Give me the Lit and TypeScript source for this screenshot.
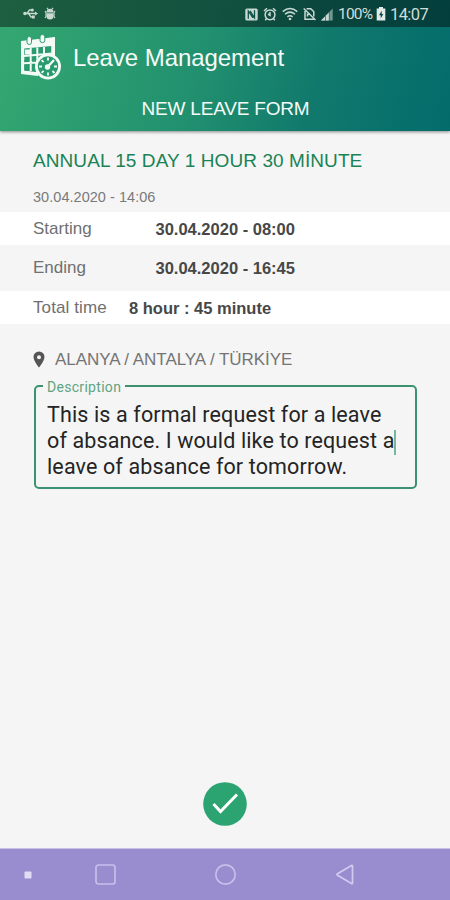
import { LitElement, html, css, svg } from "lit";
import { customElement } from "lit/decorators.js";

const icon = (w: number, h: number, body: unknown) =>
  html`<svg width=${w} height=${h} viewBox="0 0 ${w} ${h}" fill="none">${body}</svg>`;

@customElement("status-bar")
class StatusBar extends LitElement {
  static styles = css`
    :host { display: flex; align-items: center; height: 27px; padding: 0 23px 0 23px; background: rgba(0, 0, 0, 0.43); color: #d0ddd8; font: 16px/27px Roboto, sans-serif; }
    svg { display: block; flex: none; }
    .usb { margin-right: 6px; }
    .fill { flex: 1; }
    .right { display: flex; align-items: center; gap: 5px; padding-top: 1px; }
    .pct { font-size: 15.5px; margin: 0; width: 33px; letter-spacing: -0.8px; white-space: nowrap; }
    .time { font-size: 16.5px; margin-left: -1px; width: 37px; letter-spacing: -0.6px; white-space: nowrap; }
  `;
  render() {
    return html`
      <span class="usb">${icon(15, 13, svg`<g stroke="#c9d8d0" stroke-width="1.3"><path d="M1 6.500H13M4 6.500L6.500 3H9M5.500 6.500L8 10H10"/></g><g fill="#c9d8d0"><circle cx="2" cy="6.500" r="1.800"/><circle cx="9.300" cy="3" r="1.600"/><path d="M9 8.600h2.800v2.800H9zM12 4.400l3 2.100-3 2.100z"/></g>`)}</span>
      ${icon(12, 13, svg`<path d="M2.500 5.500a3.500 3.700 0 0 1 7 0z" fill="#c9d8d0"/><path d="M2.500 6.300h7v2.700a3.500 3.500 0 0 1-7 0z" fill="#c9d8d0"/><path d="M3 .8l1.200 1.700M9 .8L7.800 2.500M1 4l1 1.500V9.500L1 11M11 4l-1 1.500V9.500l1 1.500" stroke="#c9d8d0" stroke-width="1.200"/>`)}
      <span class="fill"></span>
      <span class="right">
        ${icon(13, 13, svg`<rect x=".3" y=".5" width="12.400" height="12" rx="1.500" fill="#c9d8d4"/><path d="M3.300 10.800V3L8 9.800M5 2.800L9.500 9.800V2.300" stroke="#0f5045" stroke-width="1.300"/>`)}
        ${icon(14, 14, svg`<g stroke="#c9d8d4" stroke-width="1.500"><circle cx="7" cy="7.800" r="4.900"/><path d="M1 4L4 1.300M13 4L10 1.300M7 5V8.300L5 7M3.500 11.500L2.300 13.200M10.500 11.500l1.200 1.700"/></g>`)}
        ${icon(16, 14, svg`<g stroke="#c9d8d4" stroke-width="1.500"><path d="M.7 4.600Q8-1.500 15.300 4.600M3 7.300Q8 3 13 7.300M5.400 9.900Q8 7.700 10.600 9.900"/></g><circle cx="8" cy="12" r="1.300" fill="#c9d8d4"/>`)}
        ${icon(13, 14, svg`<g stroke="#c9d8d4" stroke-width="1.500"><path d="M3.500 1.700H7.800L10.800 4.700V9.500M2 4V12.300H11M.7 1.500L12.500 13"/><path d="M4.500 9.500V7.300H7"/></g>`)}
        ${icon(12, 13, svg`<path d="M0 12.500L11.700 .5V12.500z" fill="#6f9a92"/><path d="M0 12.500L8 4.500V12.500z" fill="#c9d8d4"/><path d="M4.500 6v7M8.300 3v10" stroke="#2b6259" stroke-width=".7"/>`)}
        <span class="pct">100%</span>
        ${icon(10, 14, svg`<path d="M3 0h4v1.500h2.300v12H.7v-12H3z" fill="#e3ebe9"/><path d="M5.700 3.800L3 8.200h1.700v3.200L7.300 7H5.700z" fill="#0b4742"/>`)}
        <span class="time">14:07</span>
      </span>`;
  }
}

@customElement("form-row")
class FormRow extends LitElement {
  static properties = { label: {}, value: {} };
  declare label: string;
  declare value: string;
  static styles = css`
    :host { display: flex; align-items: center; box-sizing: border-box; height: 33px; padding: 0 0 0 33px; background: #fff; font-family: "Liberation Sans", Arial, sans-serif; font-size: 17px; line-height: 20px; color: #707070; white-space: nowrap; }
    :host([plain]) { background: none; height: 46px; }
    .label { width: 122.500px; }
    :host([compact]) .label { width: 96px; letter-spacing: 0.100px; }
    .value { font-size: 16.500px; font-weight: bold; color: #474747; }
  `;
  render() {
    return html`<span class="label">${this.label}</span><span class="value">${this.value}</span>`;
  }
}

@customElement("app-root")
class AppRoot extends LitElement {
  static styles = css`
    :host { display: flex; flex-direction: column; height: 900px; background: #f5f5f5; font-family: "Liberation Sans", Arial, sans-serif; white-space: nowrap; overflow: hidden; }
    svg { display: block; flex: none; }
    header { height: 131px; background: linear-gradient(105deg, #35a871 0%, #21906f 45%, #11796c 70%, #036b6b 100%); box-shadow: 0 1px 3px rgba(0, 0, 0, 0.45); color: #f5fbf8; }
    .brand { display: flex; align-items: center; gap: 12px; height: 62px; padding-left: 20px; font-size: 24px; letter-spacing: -0.060px; }
    .brand svg { margin-top: -3px; }
    .title { padding-left: 1px; text-align: center; font-size: 19px; line-height: 40px; letter-spacing: -0.200px; }
    .quota { margin-top: 17px; padding-left: 33px; font-size: 19px; line-height: 26px; letter-spacing: 0.080px; color: #198355; }
    .stamp { padding-left: 33px; margin-top: 10px; height: 28px; font-size: 14.500px; line-height: 26px; letter-spacing: 0.040px; color: #7a7a7a; }
    .place { display: flex; align-items: center; gap: 10px; margin-top: 23px; padding-left: 33px; height: 24px; font-size: 17px; letter-spacing: -0.040px; color: #747474; }
    .place span { padding-top: 2px; }
    fieldset { position: relative; box-sizing: border-box; margin: 14px 33px 0 34px; height: 104px; padding: 18px 0 0 11px; border: 2px solid #3c9270; border-radius: 5px; font: 21.500px/25.500px Roboto, sans-serif; letter-spacing: 0.130px; color: #242424; }
    .legend { position: absolute; left: 7px; top: -9px; padding: 0 4px 0 4px; background: #f5f5f5; color: #5fa483; font-size: 14px; line-height: 18px; letter-spacing: 0.300px; }
    .caret { display: inline-block; width: 2px; height: 25px; margin: 0 0 -1px -1px; vertical-align: middle; background: #75b89d; }
    .text { margin-top: -3px; }
    .grow { flex: 1; }
    .submit { align-self: center; margin-bottom: 22px; }
    nav { display: flex; align-items: center; height: 51px; border-top: 1px solid #c9c2e4; background: #998dd0; }
    .n1 { margin-left: 24px; } .n2 { margin-left: 62px; } .n3 { margin-left: 97px; } .n4 { margin-left: 98px; }
  `;
  render() {
    return html`
      <header>
        <status-bar></status-bar>
        <div class="brand">
          ${icon(41, 46, svg`
            <path d="M1 7L35 3V26H1z" fill="#f4fbf7"/>
            <path d="M1 7V40L18 42V38L4.300 36.500V7z" fill="#f4fbf7"/>
            <path d="M4.300 14.500L31.500 12V32L18 38L4.300 36.500z" fill="#2a9b6f"/>
            <path d="M35 3V24H31.500V4z" fill="#f4fbf7"/>
            <path d="M10.700 14V37M17.300 13.500V32M24 13V26M4 22L32 19.500M4 29.300L17 28.500" stroke="#f4fbf7" stroke-width="2"/>
            <path d="M5 15.500h5v5h-5zM24 20.500h5v3h-5z" fill="#f4fbf7"/>
            <rect x="7" y="2.500" width="4.500" height="8" rx="2.200" fill="#f4fbf7" stroke="#2a9b6f"/>
            <rect x="20" y=".6" width="4.800" height="8" rx="2.200" fill="#f4fbf7" stroke="#2a9b6f"/>
            <circle cx="28" cy="32.500" r="11.600" fill="#2a9b6f" stroke="#f4fbf7" stroke-width="2.800"/>
            <path d="M28 23.500v3M28 38.500v3M19 32.500h3M34 32.500h3M21.600 26.100l2 2M32.500 37l2 2M21.600 38.900l2-2" stroke="#f4fbf7" stroke-width="1.800"/>
            <path d="M26.500 34L34 26" stroke="#f4fbf7" stroke-width="2.400"/><circle cx="27.500" cy="33" r="2.700" fill="#f4fbf7"/>`)}
          <span>Leave Management</span>
        </div>
        <div class="title">NEW LEAVE FORM</div>
      </header>
      <div class="quota">ANNUAL 15 DAY 1 HOUR 30 MİNUTE</div>
      <div class="stamp">30.04.2020 - 14:06</div>
      <form-row label="Starting" value="30.04.2020 - 08:00"></form-row>
      <form-row plain label="Ending" value="30.04.2020 - 16:45"></form-row>
      <form-row compact label="Total time" value="8 hour : 45 minute"></form-row>
      <div class="place">
        ${icon(12, 17, svg`<path fill-rule="evenodd" d="M6 .5a5.500 5.500 0 0 0-5.500 5.500C.5 10 6 16.500 6 16.500S11.500 10 11.500 6A5.500 5.500 0 0 0 6 .5zm0 3.700a2 2 0 1 1 0 4 2 2 0 0 1 0-4z" fill="#555"/>`)}
        <span>ALANYA / ANTALYA / TÜRKİYE</span>
      </div>
      <fieldset>
        <span class="legend">Description</span>
        <div class="text">This is a formal request for a leave<br>of absance. I would like to request a<span class="caret"></span><br>leave of absance for tomorrow.</div>
      </fieldset>
      <div class="grow"></div>
      <div class="submit">${icon(44, 44, svg`<circle cx="22" cy="22" r="21.800" fill="#2ba471"/><path d="M10.500 22L17.500 29.500L34 12.500" stroke="#fff" stroke-width="3"/>`)}</div>
      <nav>
        <span class="n1">${icon(8, 8, svg`<rect x=".5" y=".5" width="7" height="7" rx="1" fill="#e1dcf3"/>`)}</span>
        <span class="n2">${icon(23, 23, svg`<rect x="2" y="2" width="19" height="19" rx="2.500" stroke="#c8bfea" stroke-width="1.700"/>`)}</span>
        <span class="n3">${icon(23, 23, svg`<circle cx="11.500" cy="11.500" r="9.700" stroke="#c8bfea" stroke-width="1.700"/>`)}</span>
        <span class="n4">${icon(20, 23, svg`<path d="M17.500 3.200V20Q17.500 21 16.500 20.500L2.500 12.300Q1.300 11.500 2.500 10.700L16.500 2.500Q17.500 2 17.500 3.200z" stroke="#d3cbef" stroke-width="1.700"/>`)}</span>
      </nav>`;
  }
}
